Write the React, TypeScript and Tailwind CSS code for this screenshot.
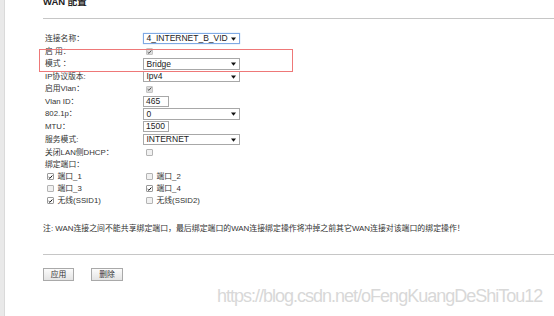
import React from "react"

const font = { fontFamily: '"Liberation Sans", "Noto Sans CJK SC", sans-serif' }

function Arrow() {
  return (
    <svg width="5" height="4" viewBox="0 0 5 4" className="shrink-0">
      <path d="M0 0.5 L5 0.5 L2.5 3.8 Z" fill="#111" />
    </svg>
  )
}

function Select({ value, focused }: { value: string; focused?: boolean }) {
  return (
    <div
      className={
        "w-[97px] h-[11.5px] flex items-center justify-between pl-[2.5px] pr-[3px] bg-white text-[8.5px] text-[#222] leading-none " +
        (focused ? "border border-[#7fa9e4] shadow-[0_0_1px_#9cc0f0]" : "border border-[#a8a8a8]")
      }
    >
      <span>{value}</span>
      <Arrow />
    </div>
  )
}

function TextInput({ value }: { value: string }) {
  return (
    <div className="w-[26px] h-[11px] border border-[#a8a8a8] bg-white flex items-center pl-[2px] text-[8.5px] text-[#222] leading-none">
      {value}
    </div>
  )
}

function Check({ checked, disabled }: { checked?: boolean; disabled?: boolean }) {
  const box = disabled
    ? "bg-[#dcdcdc] border-[#c4c4c4]"
    : checked
      ? "bg-white border-[#9a9a9a]"
      : "bg-[#f1f1f1] border-[#b4b4b4]"
  return (
    <span className={"w-[7px] h-[7px] border rounded-[1px] flex items-center justify-center shrink-0 " + box}>
      {checked && (
        <svg width="6" height="6" viewBox="0 0 6 6">
          <path d="M0.8 3.2 L2.3 4.6 L5.2 1.2" fill="none" stroke={disabled ? "#555" : "#111"} strokeWidth="1.2" />
        </svg>
      )}
    </span>
  )
}

// 行高交替 13/12，贴合原图的行距
function Row({ label, tall, children }: { label: string; tall?: boolean; children?: React.ReactNode }) {
  return (
    <div className={"flex items-center " + (tall ? "h-[13px]" : "h-[12px]")}>
      <div className="w-[100px] pl-[2px] whitespace-nowrap">{label}</div>
      <div className="flex items-center">{children}</div>
    </div>
  )
}

function Port({ label, checked }: { label: string; checked?: boolean }) {
  return (
    <div className="w-[99px] flex items-center gap-[3.5px]">
      <Check checked={checked} />
      <span>{label}</span>
    </div>
  )
}

export default function App() {
  return (
    <div className="relative w-[554px] h-[316px] overflow-hidden bg-white flex text-[#333] text-[7.8px] leading-none" style={font}>
      <div className="w-[5px] bg-[#e9e9e9] border-r border-[#dadada]" />

      <div className="flex-1 pl-[38px]">
        {/* 标题 */}
        <div className="-mt-[4px] h-[12px] leading-[12px] text-[9.5px] font-bold text-[#222]">WAN 配置</div>
        <div className="mt-[10px] border-t border-[#c6c6c6]" />

        <div className="mt-[13px]">
          <Row label="连接名称：" tall>
            <Select value="4_INTERNET_B_VID" focused />
          </Row>
          <Row label="启 用：" tall>
            <span className="ml-[3px]"><Check checked disabled /></span>
          </Row>
          <Row label="模式 ：">
            <Select value="Bridge" />
          </Row>
          <Row label="IP协议版本:" tall>
            <Select value="Ipv4" />
          </Row>
          <Row label="启用Vlan：">
            <span className="ml-[3px]"><Check checked disabled /></span>
          </Row>
          <Row label="Vlan ID：" tall>
            <TextInput value="465" />
          </Row>
          <Row label="802.1p：">
            <Select value="0" />
          </Row>
          <Row label="MTU：" tall>
            <TextInput value="1500" />
          </Row>
          <Row label="服务模式:" tall>
            <Select value="INTERNET" />
          </Row>
          <Row label="关闭LAN侧DHCP：" tall>
            <span className="ml-[3px]"><Check /></span>
          </Row>
          <Row label="绑定端口：" />
        </div>

        <div className="pl-[4px]">
          <div className="flex h-[12px] items-center">
            <Port label="端口_1" checked />
            <Port label="端口_2" />
          </div>
          <div className="flex h-[12px] items-center">
            <Port label="端口_3" />
            <Port label="端口_4" checked />
          </div>
          <div className="flex h-[12px] items-center">
            <Port label="无线(SSID1)" checked />
            <Port label="无线(SSID2)" />
          </div>
        </div>

        <div className="mt-[16px] h-[12px] flex items-center whitespace-nowrap text-[7.9px]">
          注: WAN连接之间不能共享绑定端口，最后绑定端口的WAN连接绑定操作将冲掉之前其它WAN连接对该端口的绑定操作！
        </div>

        <div className="mt-[19px] border-t border-[#c6c6c6]" />

        <div className="mt-[13px] flex gap-[17px]">
          <button className="w-[31px] h-[13px] border border-[#a9a9a9] bg-gradient-to-b from-[#fbfbfb] to-[#e4e4e4] text-[7.8px] text-[#333] leading-none flex items-center justify-center">
            应用
          </button>
          <button className="w-[32px] h-[13px] border border-[#a9a9a9] bg-gradient-to-b from-[#fbfbfb] to-[#e4e4e4] text-[7.8px] text-[#333] leading-none flex items-center justify-center">
            删除
          </button>
        </div>
      </div>

      {/* 红框标注 */}
      <div className="absolute left-[39px] top-[49px] w-[254px] h-[23px] border border-[#ee7878]" />

      {/* 水印 */}
      <div className="absolute left-[217px] top-[287px] text-[18px] leading-[18px] tracking-[-1px] text-[#d8d8d8] whitespace-nowrap">
        https://blog.csdn.net/oFengKuangDeShiTou12
      </div>
    </div>
  )
}
